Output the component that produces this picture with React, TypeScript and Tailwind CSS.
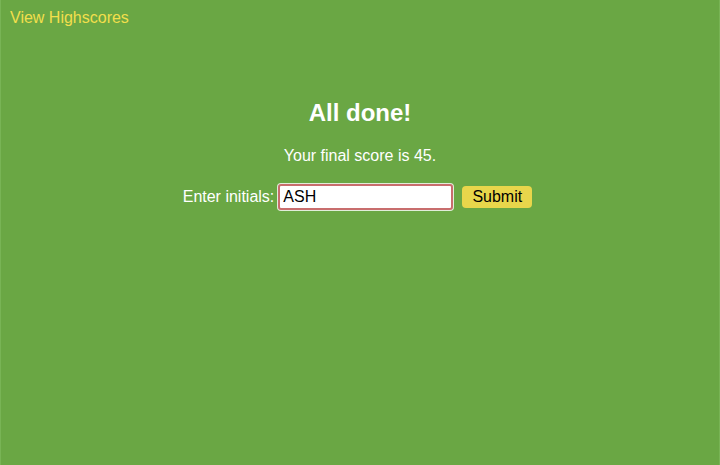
export default function App() {
  return (
    <div className="w-[720px] h-[465px] bg-[#6aa744] border-x border-[#78b455] font-['Liberation_Sans',Arial,sans-serif] text-white">
      <div className="px-[9px] pt-[8px] text-[16px] leading-[20px] text-[#f2df4c]">View Highscores</div>
      <div className="flex flex-col items-center pt-[71px]">
        <h1 className="text-[24px] leading-[28px] font-bold">All done!</h1>
        <p className="mt-[19px] text-[16px] leading-[20px]">Your final score is 45.</p>
        <div className="mt-[18px] flex items-center text-[16px] pr-[5px]">
          <span className="mr-[4px]">Enter initials:</span>
          <input
            defaultValue="ASH"
            className="w-[175px] h-[26px] px-[3px] bg-white text-black rounded-[3px] border-2 border-[#c86d6d] ring-1 ring-white/80 outline-none text-[16px]"
          />
          <button className="ml-[9px] w-[70px] h-[22px] rounded-[4px] bg-[#e8d64b] text-black text-[16px] leading-[22px]">Submit</button>
        </div>
      </div>
    </div>
  );
}
